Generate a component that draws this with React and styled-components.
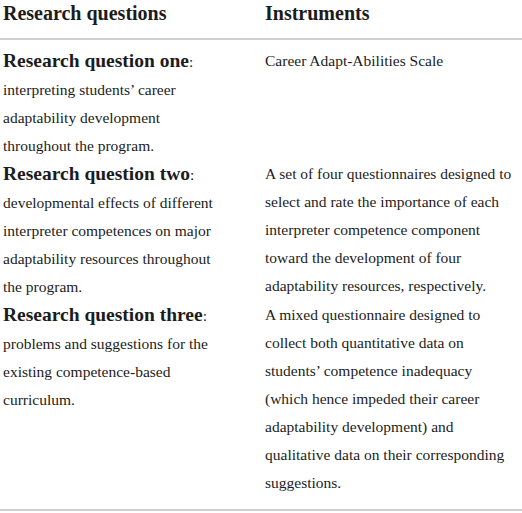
import { Fragment } from "react";
import styled, { createGlobalStyle } from "styled-components";

const GlobalStyle = createGlobalStyle`
  html, body {
    margin: 0;
    padding: 0;
    background: #ffffff;
  }
  body {
    font-family: "Liberation Serif", "Times New Roman", serif;
    color: #1c1c1c;
  }
`;

const StyledTable = styled.div`
  display: grid;
  grid-template-columns: 262px 1fr;
  width: 522px;
  border-bottom: 2px solid #d0d0d0;
  padding-bottom: 12px;

  & .head {
    font-size: 20px;
    font-weight: bold;
    line-height: 26px;
    padding: 0 3px 12px;
    border-bottom: 2px solid #d0d0d0;
  }
`;

const StyledCell = styled.div`
  padding: ${(props) => (props.$first ? "7px" : "0")} 3px 0;
  font-size: 15.5px;
  line-height: 28px;

  & .title {
    font-size: 19.5px;
    font-weight: bold;
  }

  & .line {
    display: block;
    white-space: nowrap;
  }
`;

const rows = [
  {
    title: "Research question one",
    question: [
      "interpreting students’ career",
      "adaptability development",
      "throughout the program.",
    ],
    instrument: ["Career Adapt-Abilities Scale"],
  },
  {
    title: "Research question two",
    question: [
      "developmental effects of different",
      "interpreter competences on major",
      "adaptability resources throughout",
      "the program.",
    ],
    instrument: [
      "A set of four questionnaires designed to",
      "select and rate the importance of each",
      "interpreter competence component",
      "toward the development of four",
      "adaptability resources, respectively.",
    ],
  },
  {
    title: "Research question three",
    question: [
      "problems and suggestions for the",
      "existing competence-based",
      "curriculum.",
    ],
    instrument: [
      "A mixed questionnaire designed to",
      "collect both quantitative data on",
      "students’ competence inadequacy",
      "(which hence impeded their career",
      "adaptability development) and",
      "qualitative data on their corresponding",
      "suggestions.",
    ],
  },
];

export default function App() {
  return (
    <>
      <GlobalStyle />
      <StyledTable>
        <div className="head">Research questions</div>
        <div className="head">Instruments</div>
        {rows.map((row, index) => (
          <Fragment key={row.title}>
            <StyledCell $first={index === 0}>
              <span className="line">
                <span className="title">{row.title}</span>:
              </span>
              {row.question.map((text) => (
                <span className="line" key={text}>
                  {text}
                </span>
              ))}
            </StyledCell>
            <StyledCell $first={index === 0}>
              {row.instrument.map((text) => (
                <span className="line" key={text}>
                  {text}
                </span>
              ))}
            </StyledCell>
          </Fragment>
        ))}
      </StyledTable>
    </>
  );
}
